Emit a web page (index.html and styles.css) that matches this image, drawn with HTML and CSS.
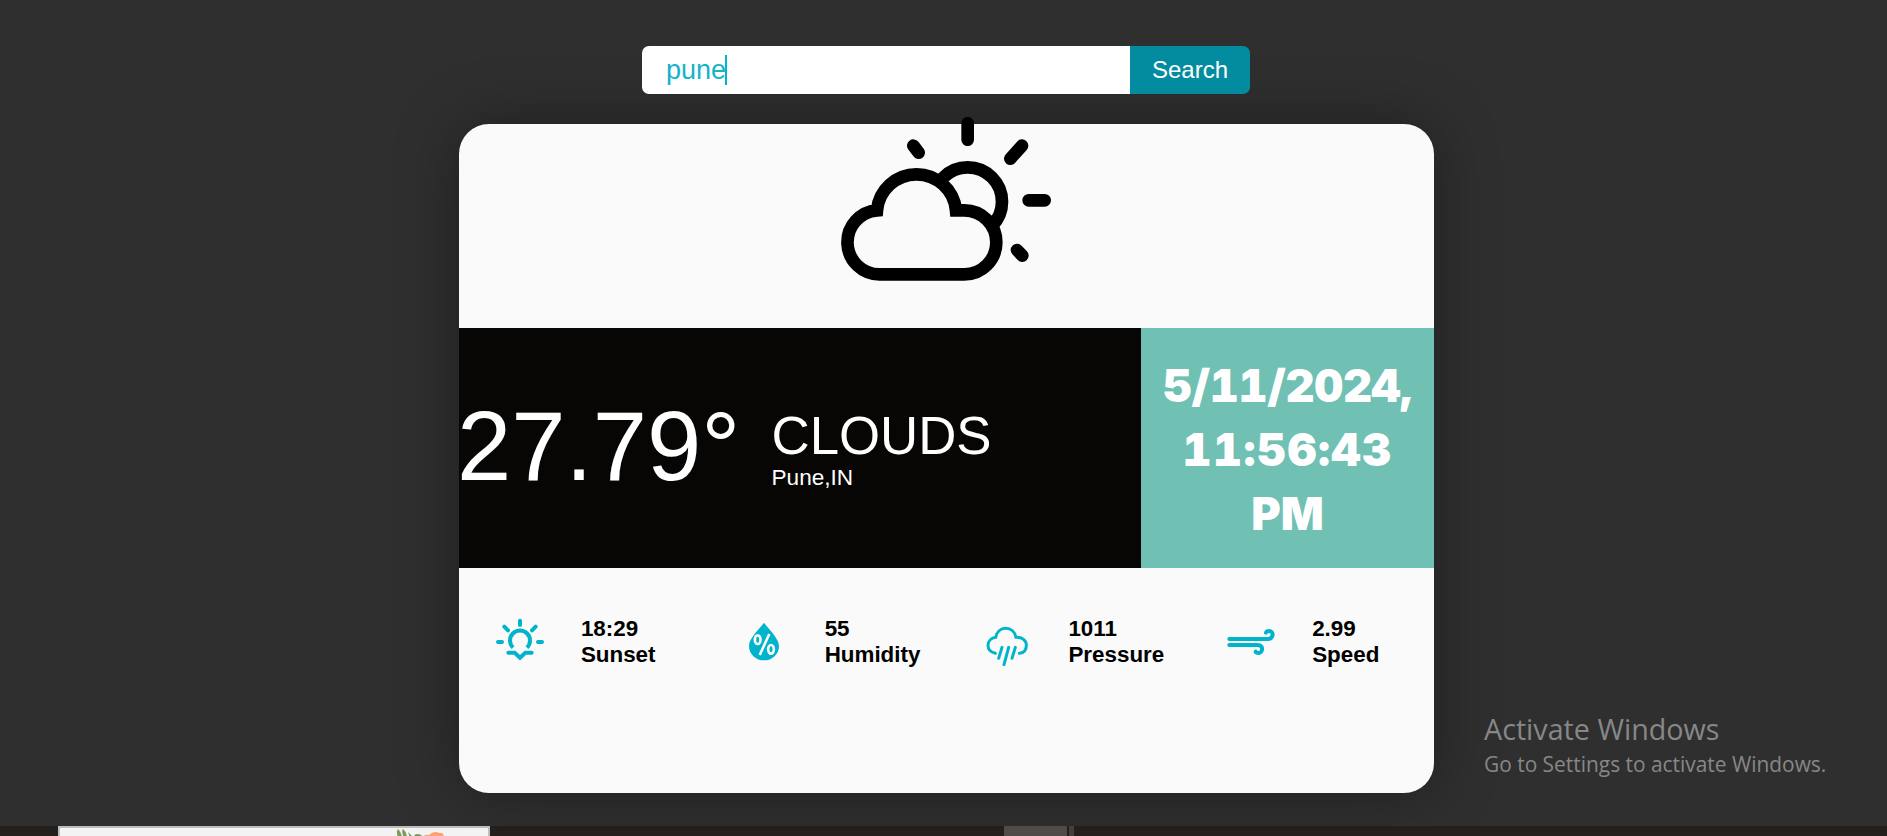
FILE: index.html
```html
<!DOCTYPE html>
<html lang="en">
<head>
<meta charset="utf-8">
<title>Weather</title>
<link rel="stylesheet" href="styles.css">
</head>
<body>
<main class="page">
  <form class="search">
    <div class="search-field"><span>pune</span><i class="caret"></i></div>
    <button class="search-button" type="button">Search</button>
  </form>
  <article class="card">
    <div class="hero">
      <svg class="hero-icon" viewBox="60 48 640 498" fill="none" stroke="#000" stroke-width="38">
        <circle cx="443" cy="305" r="103"/>
        <path fill="#fafafa" d="M433 331H408A119 119 0 0 0 171 331A96.150 96.150 0 0 0 179 523H433A96 96 0 0 0 433 331Z"/>
        <path stroke-linecap="round" d="M443 70V119M606 137L571 176M626 301H674M280 137L296 158M591 450L607 467"/>
      </svg>
    </div>
    <section class="band">
      <div class="now">
        <div class="temp">27.79°</div>
        <div>
          <div class="condition">CLOUDS</div>
          <div class="place">Pune,IN</div>
        </div>
      </div>
      <div class="date"><span class="day">5/11/2024,</span><span class="time">11:56:43</span><span class="half">PM</span></div>
    </section>
    <section class="stats">
      <div class="stat">
        <svg viewBox="138 84 144 144" stroke-width="12" stroke-linecap="round">
          <path d="M210 92V105M163 110L174 121M257 110L246 121M144 156H156M264 156H276"/>
          <path stroke-linecap="butt" d="M189 173A30 30 0 1 1 231 173"/>
          <path d="M175 188H194L210 203L226 188H245"/>
        </svg>
        <p>18:29<br>Sunset</p>
      </div>
      <div class="stat">
        <svg viewBox="870 84 144 144">
          <path stroke="none" fill="#00b4cc" d="M942 98C948 108 987 143 987 168A45 43 0 0 1 897 168C897 143 936 108 942 98Z"/>
          <g stroke="#fafafa" stroke-width="8"><ellipse cx="923" cy="149" rx="8.500" ry="13"/><ellipse cx="963" cy="178" rx="8.500" ry="13"/><path d="M958 132L929 195"/></g>
        </svg>
        <p>55<br>Humidity</p>
      </div>
      <div class="stat">
        <svg viewBox="130 84 144 144" stroke-width="9" stroke-linecap="round">
          <path d="M167 190C153 187 145 178 145 166C145 153 155 144 168 142C171 126 183 115 198 115C214 115 226 126 229 142C248 141 260 152 260 166C260 180 252 189 239 190"/>
          <path d="M187 172L177 205M207 172L193 224M227 172L217 205"/>
        </svg>
        <p>1011<br>Pressure</p>
      </div>
      <div class="stat">
        <svg viewBox="862 84 144 144" stroke-width="12" stroke-linecap="round">
          <path d="M869 147H984C1003 147 1003 123 988 123C983 123 980 125 979 128M869 165H954C972 165 971 189 956 189C951 189 949 188 948 185"/>
        </svg>
        <p>2.99<br>Speed</p>
      </div>
    </section>
  </article>
  <aside class="watermark">
    <div class="watermark-title">Activate Windows</div>
    <div class="watermark-text">Go to Settings to activate Windows.</div>
  </aside>
  <footer class="strip">
    <div class="sheet">
      <svg class="flower" viewBox="0 0 60 10"><path fill="#7d9a58" d="M4 10Q2 3 4 1Q8 5 8 10ZM10 10Q7 3 9 1Q13 4 13 10ZM16 10L14 4L20 10ZM20 7Q26 4 30 10H23Z"/><path fill="#ff9f72" d="M28 10Q30 6 35 7Q40 2 45 5Q50 4 50 10Z"/></svg>
    </div>
    <div class="tile"></div>
    <div class="tile tile-small"></div>
  </footer>
</main>
</body>
</html>
```

FILE: styles.css
```css
* { box-sizing: border-box; }
body { margin: 0; background: #2f2f2f; font-family: "Liberation Sans", Arial, sans-serif; }
p { margin: 0; }
.page { position: relative; display: flex; flex-direction: column; height: 836px; padding-top: 46px; overflow: hidden; }
.search { z-index: 1; display: flex; width: 608px; height: 48px; margin-left: 642px; border-radius: 7px; overflow: hidden; flex: none; }
.search-field { display: flex; align-items: center; width: 488px; padding-left: 24px; background: #fff; color: #14b2cb; font-size: 27px; }
.caret { width: 2px; height: 30px; margin-left: -1px; background: #00b4cc; }
.search-button { width: 120px; padding: 0; border: 0; background: #038c9f; color: #fff; font: 24px "Liberation Sans", Arial, sans-serif; }
.card { flex: none; width: 975px; height: 669px; margin: 30px 0 0 459px; border-radius: 30px; background: #fafafa; box-shadow: 0 0 62px rgba(0, 0, 0, .34); }
.hero { display: flow-root; height: 204px; padding-left: 381px; }
.hero-icon { display: block; width: 213.333px; height: 166px; margin-top: -8px; }
.band { display: flex; height: 240px; color: #fff; }
.now { display: flex; align-items: center; width: 682px; padding-bottom: 3px; background: #070604; }
.temp { width: 312.500px; font-size: 97.600px; line-height: 112px; text-indent: -2px; }
.condition { font-size: 52.800px; line-height: 56px; padding-top: 7px; }
.place { font-size: 22.600px; line-height: 28px; }
.date { display: flex; flex-direction: column; align-items: center; justify-content: center; flex: 1; padding-top: 4px; background: #70c0b4; font: 900 45px/64px Inter, "Liberation Sans", sans-serif; font-variant-numeric: tabular-nums; font-feature-settings: "calt" 0; }
.day { letter-spacing: -.3px; }
.time { letter-spacing: 1.500px; }
.stats { display: grid; grid-template-columns: repeat(4, 1fr); padding-top: 46px; }
.stat { display: grid; grid-template-columns: 1fr 1fr; font-weight: 700; font-size: 22.400px; line-height: 26px; }
.stat svg { width: 48px; height: 48px; margin-top: 4px; justify-self: center; fill: none; stroke: #00b4cc; }
.stat p { padding-top: 2px; }
.watermark { position: absolute; left: 1484px; top: 709px; color: #878787; font-family: "Open Sans", "Noto Sans", sans-serif; white-space: nowrap; }
.watermark-title { font-size: 28.700px; line-height: 40px; }
.watermark-text { font-size: 20.900px; line-height: 30px; }
.strip { display: flex; flex: none; height: 10px; margin-top: 33px; padding-left: 58px; background: #231f1c; }
.sheet { width: 432px; border: 2px solid #bdbdbd; border-bottom: 0; background: #f3f3f3; }
.flower { display: block; width: 60px; height: 10px; margin-left: 334px; }
.tile { width: 63px; margin-left: 514px; background: #504b49; }
.tile-small { width: 5px; margin-left: 2px; background: #443f3d; }
```
